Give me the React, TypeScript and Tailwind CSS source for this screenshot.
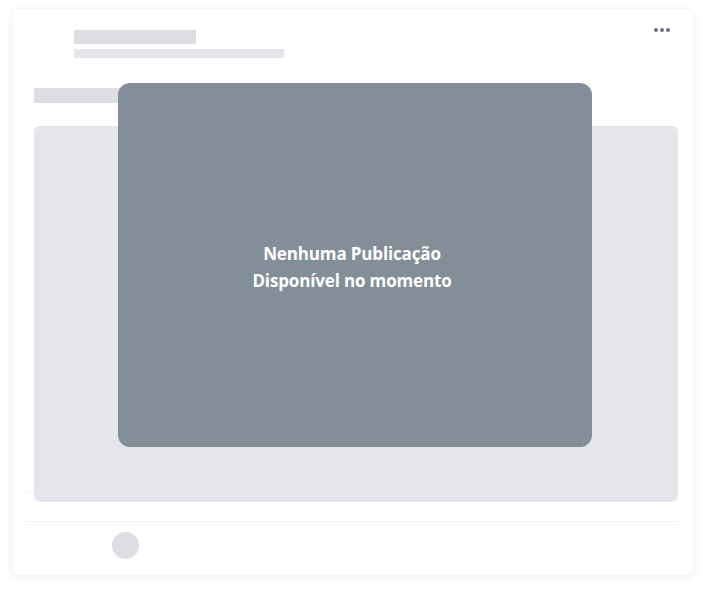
const PostSkeleton = () => {
  return (
    <div className="relative ml-[12px] mt-[8px] w-[682px] h-[568px] rounded-[8px] bg-white shadow-[0_2px_10px_rgba(0,0,0,0.06)] border border-[#f5f5f7] pl-[13px] pr-[15px] box-border">
      {/* header */}
      <div className="pt-[21px] pl-[48px]">
        <div className="w-[122px] h-[14px] bg-[#dcdee4]" />
        <div className="mt-[5px] w-[210px] h-[9px] bg-[#e5e6eb]" />
      </div>
      <div className="absolute top-[19px] right-[23px] flex gap-[2px]">
        <span className="w-[4px] h-[4px] rounded-full bg-[#6b7280]" />
        <span className="w-[4px] h-[4px] rounded-full bg-[#6b7280]" />
        <span className="w-[4px] h-[4px] rounded-full bg-[#6b7280]" />
      </div>

      {/* text line */}
      <div className="ml-[8px] mt-[30px] w-[200px] h-[15px] bg-[#dcdee4]" />

      {/* media */}
      <div className="mt-[23px] w-[652px] h-[367px] border-b border-[#f0f0f0]">
        <div className="ml-[8px] w-[644px] h-[376px] rounded-[6px] bg-[#e5e6eb]" />
      </div>

      {/* footer */}
      <div className="mt-[28px] w-[652px] border-t border-[#f0f0f0] pt-[10px] pl-[86px]">
        <div className="w-[27px] h-[27px] rounded-full bg-[#dcdee4]" />
      </div>

      {/* empty overlay */}
      <div className="absolute left-[105px] top-[74px] w-[474px] h-[364px] rounded-[12px] bg-[#848e99] flex items-center justify-center pt-[4px] pr-[6px]">
        <p className="text-center text-white font-bold text-[17px] leading-[27px] font-['Open_Sans',sans-serif] tracking-[-0.15px]">
          Nenhuma Publicação
          <br />
          Disponível no momento
        </p>
      </div>
    </div>
  );
};

export default function App() {
  return (
    <div className="w-[706px] h-[592px] bg-white">
      <PostSkeleton />
    </div>
  );
}
